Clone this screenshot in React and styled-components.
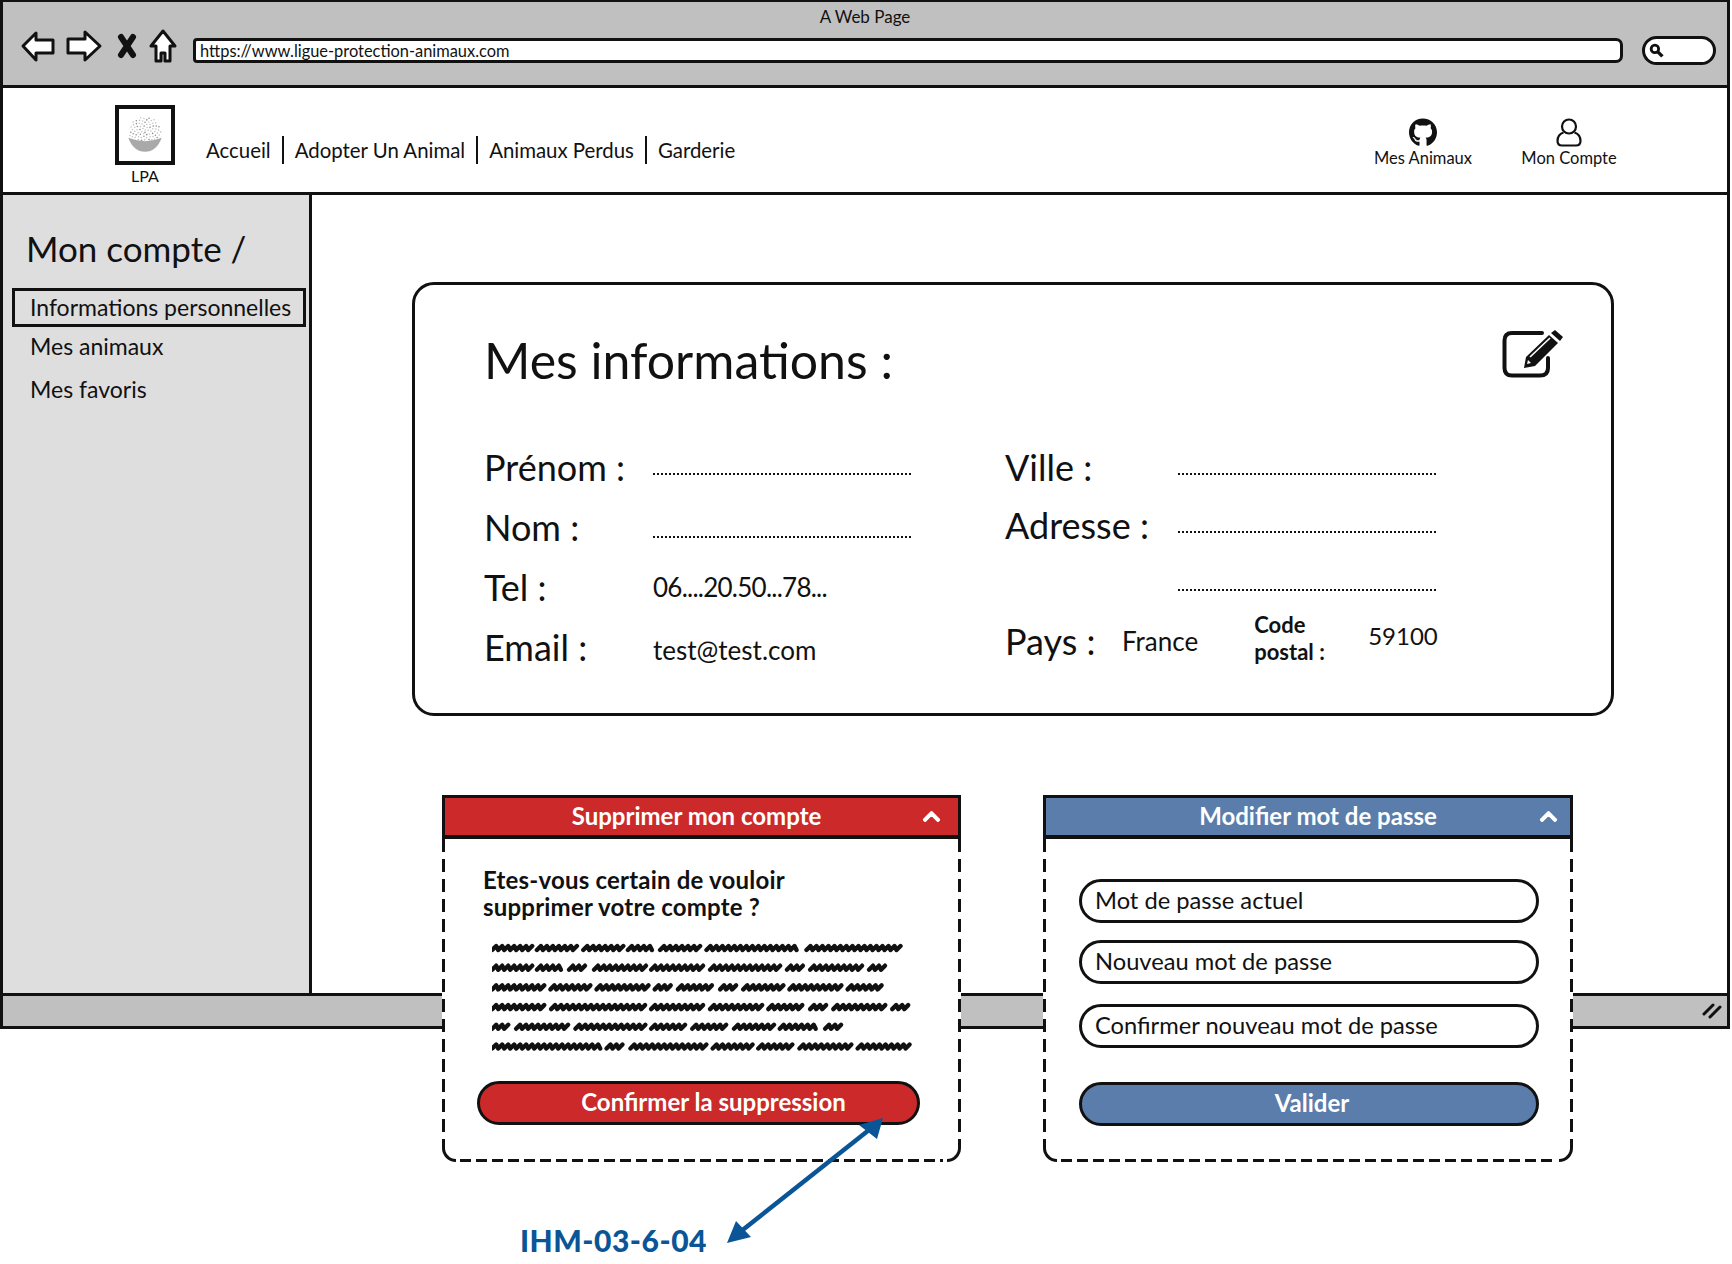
import React from "react";
import styled, { createGlobalStyle } from "styled-components";
import { FaGithub, FaChevronUp } from "react-icons/fa";

const INK = "#111";
const RED = "#cc2a2a";
const BLUE = "#5a7dab";

const GlobalStyle = createGlobalStyle`
  html, body {
    margin: 0;
    padding: 0;
    background: #fff;
  }
  body {
    font-family: "Lato", "Open Sans", sans-serif;
    color: ${INK};
  }
  * { box-sizing: border-box; }
`;

const Page = styled.div`
  position: relative;
  width: 1732px;
  height: 1264px;
  overflow: hidden;
`;

const Window = styled.div`
  width: 1730px;
  height: 1029px;
  border: 3px solid ${INK};
  border-top-width: 2px;
  display: flex;
  flex-direction: column;
`;

/* browser chrome */
const TitleBar = styled.div`
  height: 86px;
  flex: none;
  background: #c0c0c0;
  border-bottom: 3px solid ${INK};
  display: flex;
  flex-direction: column;
  padding-top: 5px;
`;

const WindowTitle = styled.div`
  font-size: 17px;
  line-height: 20px;
  text-align: center;
  margin-bottom: 9px;
`;

const ToolRow = styled.div`
  display: flex;
  align-items: center;
  padding-left: 17px;
`;

const ToolIcons = styled.svg`
  width: 164px;
  height: 36px;
  flex: none;
  margin: -9px 9px 0 0;
`;

const UrlBar = styled.div`
  width: 1430px;
  height: 25px;
  background: #fff;
  border: 3px solid ${INK};
  border-radius: 4px 7px 7px 4px;
  font-size: 16.4px;
  line-height: 19px;
  padding-left: 4px;
`;

const SearchBox = styled.div`
  width: 74px;
  height: 29px;
  margin-left: 19px;
  background: #fff;
  border: 3px solid ${INK};
  border-radius: 15px;
  display: flex;
  align-items: center;
  padding-left: 4px;
`;

/* site header */
const Header = styled.header`
  height: 107px;
  flex: none;
  border-bottom: 3px solid ${INK};
  display: flex;
  padding-left: 112px;
`;

const Brand = styled.div`
  width: 60px;
  padding-top: 17px;
  text-align: center;
  font-size: 16px;
  line-height: 20px;
  flex: none;
`;

const LogoBox = styled.div`
  width: 60px;
  height: 60px;
  border: 4px solid ${INK};
  background: #fff;
  margin-bottom: 1px;
  display: flex;
  align-items: center;
  justify-content: center;
`;

const NavList = styled.nav`
  display: flex;
  align-items: center;
  height: 28px;
  margin-top: 48px;
  margin-left: 31px;
`;

const NavLink = styled.a`
  font-size: 20.4px;
  line-height: 28px;
  padding: 0 11px;
  border-left: 2px solid ${INK};
  &:first-child {
    border-left: 0;
    padding-left: 0;
  }
`;

const HeaderActions = styled.div`
  margin-left: auto;
  margin-right: 108px;
  display: flex;
  gap: 46px;
  padding-top: 30px;
`;

const HeaderAction = styled.div`
  display: flex;
  flex-direction: column;
  align-items: center;
  font-size: 16.5px;
  line-height: 20px;
  width: 100px;
  svg {
    width: 28px;
    height: 29px;
    margin-bottom: 1px;
  }
`;

/* body */
const Body = styled.div`
  height: 798px;
  flex: none;
  display: flex;
`;

const Sidebar = styled.aside`
  width: 309px;
  flex: none;
  background: #dedede;
  border-right: 3px solid ${INK};
  padding: 30px 3px 0 9px;
`;

const SidebarTitle = styled.h2`
  margin: 0 0 17px 14px;
  font-size: 35px;
  line-height: 46px;
  font-weight: 400;
`;

const SideItem = styled.div`
  height: ${(p) => (p.$active ? "39px" : "43px")};
  line-height: ${(p) => (p.$active ? "33px" : "43px")};
  font-size: 23px;
  padding-left: 15px;
  white-space: nowrap;
  border: ${(p) => (p.$active ? `3px solid ${INK}` : "0")};
  margin-left: ${(p) => (p.$active ? "0" : "3px")};
  margin-bottom: ${(p) => (p.$active ? "-2px" : "0")};
`;

const Main = styled.main`
  flex: 1;
  padding: 87px 0 0 100px;
`;

const InfoCard = styled.section`
  position: relative;
  width: 1202px;
  height: 434px;
  border: 3px solid ${INK};
  border-radius: 22px;
  padding: 43px 0 0 69px;
`;

const CardTitle = styled.h1`
  margin: 0 0 45px;
  font-size: 50px;
  line-height: 64px;
  font-weight: 400;
`;

const EditButton = styled.svg`
  position: absolute;
  top: 45px;
  right: 48px;
  width: 61px;
  height: 48px;
`;

const FieldColumns = styled.div`
  display: flex;
`;

const FieldColumn = styled.div`
  width: ${(p) => p.$width}px;
  flex: none;
  margin-top: ${(p) => p.$top || 0}px;
`;

const FieldRow = styled.div`
  height: ${(p) => p.$height}px;
  display: flex;
  align-items: center;
`;

const FieldLabel = styled.div`
  width: ${(p) => p.$width}px;
  flex: none;
  font-size: 36px;
  line-height: 44px;
  white-space: nowrap;
`;

const DottedLine = styled.div`
  width: 258px;
  height: 2px;
  margin-top: ${(p) => p.$drop || 14}px;
  border-bottom: 2px dotted ${INK};
`;

const FieldValue = styled.div`
  font-size: ${(p) => p.$size || 26}px;
  line-height: 32px;
  white-space: nowrap;
  letter-spacing: ${(p) => p.$spacing || 0}px;
  margin-top: ${(p) => p.$drop || 0}px;
`;

const CodeLabel = styled.div`
  width: 114px;
  margin-left: 56px;
  flex: none;
  font-size: 22px;
  font-weight: 700;
  line-height: 27px;
  margin-top: -6px;
`;

const PanelRow = styled.div`
  display: flex;
  gap: 82px;
  margin: 79px 0 0 30px;
  position: relative;
  z-index: 2;
`;

const Panel = styled.section`
  width: ${(p) => p.$width}px;
  height: 367px;
  background: #fff;
  display: flex;
  flex-direction: column;
`;

const PanelHeader = styled.div`
  height: 44px;
  flex: none;
  background: ${(p) => p.$color};
  border: 3px solid ${INK};
  border-bottom-width: 4px;
  color: #fff;
  font-size: 24px;
  font-weight: 700;
  line-height: 36px;
  text-align: center;
  position: relative;
  padding: ${(p) => p.$padding};
  svg {
    position: absolute;
    right: ${(p) => p.$chevron}px;
    top: 9px;
    font-size: 19px;
    stroke: #fff;
    stroke-width: 30px;
  }
`;

const Corner = styled.i`
  position: absolute;
  bottom: 0;
  ${(p) => p.$side}: 0;
  width: 14px;
  height: 14px;
  border-bottom: 3px solid ${INK};
  border-${(p) => p.$side}: 3px solid ${INK};
  border-bottom-${(p) => p.$side}-radius: 14px;
`;

// long dashes of the mockup, a css dashed border is too short for them
const PanelBody = styled.div`
  flex: 1;
  position: relative;
  padding: ${(p) => p.$padding};
  background:
    repeating-linear-gradient(to bottom, ${INK} 0 13px, transparent 13px 20px) left top / 3px calc(100% - 14px) no-repeat,
    repeating-linear-gradient(to bottom, ${INK} 0 13px, transparent 13px 20px) right top / 3px calc(100% - 14px) no-repeat,
    repeating-linear-gradient(to right, ${INK} 0 11px, transparent 11px 16px) 18px bottom / calc(100% - 36px) 3px no-repeat;
`;

const Question = styled.p`
  margin: 0 0 23px 6px;
  font-size: 24px;
  font-weight: 700;
  line-height: 27px;
  letter-spacing: 0.2px;
`;

const Scribble = styled.svg`
  display: block;
  width: 425px;
  height: 118px;
  margin: 0 0 20px 15px;
`;

const ActionButton = styled.div`
  height: 44px;
  background: ${(p) => p.$color};
  border: 3px solid ${INK};
  border-radius: 22px;
  color: #fff;
  font-size: 24px;
  font-weight: 700;
  line-height: 35px;
  text-align: center;
  padding-left: ${(p) => p.$shift || 0}px;
`;

const PasswordField = styled.div`
  height: 44px;
  margin-bottom: ${(p) => p.$gap}px;
  border: 3px solid ${INK};
  border-radius: 22px;
  font-size: 23.7px;
  line-height: 36px;
  padding-left: 13px;
`;

const StatusBar = styled.div`
  flex: 1;
  background: #c0c0c0;
  border-top: 3px solid ${INK};
  display: flex;
  justify-content: flex-end;
  align-items: center;
  padding-right: 4px;
`;

/* annotation arrow over the page */
const AnnotationArrow = styled.svg`
  position: absolute;
  left: 0;
  top: 0;
  width: 1732px;
  height: 1264px;
  z-index: 3;
  pointer-events: none;
`;

const AnnotationLabel = styled.div`
  position: absolute;
  left: 520px;
  top: 1221px;
  z-index: 3;
  color: #0a5596;
  font-size: 30px;
  font-weight: 900;
  line-height: 38px;
  letter-spacing: 0.5px;
`;

const scribbleLines = [
  [[205, 315], [330, 440], [460, 570], [585, 660], [675, 785], [805, 1065], [1085, 1350]],
  [[205, 315], [330, 405], [420, 470], [490, 635], [650, 800], [815, 1010], [1030, 1075], [1095, 1240], [1260, 1305]],
  [[205, 350], [368, 478], [497, 642], [660, 708], [725, 825], [843, 890], [908, 1018], [1037, 1183], [1200, 1300]],
  [[205, 352], [370, 632], [650, 797], [815, 960], [978, 1078], [1095, 1143], [1160, 1307], [1325, 1375]],
  [[205, 253], [272, 418], [438, 632], [650, 748], [765, 865], [882, 992], [1010, 1118], [1137, 1185]],
  [[205, 508], [525, 572], [592, 805], [822, 932], [950, 1048], [1065, 1212], [1228, 1375]],
];

// squiggle for one word, coordinates are the 2.8x columns measured on the mockup
const wordPath = ([from, to], y) => {
  const x0 = from / 2.8 - 73;
  const x1 = to / 2.8 - 73;
  let d = `M${x0.toFixed(1)} ${y + 2}`;
  let up = true;
  for (let x = x0 + 3; x < x1; x += 3) {
    d += ` L${(x + (up ? 1 : 0)).toFixed(1)} ${y + (up ? -2 : 2)}`;
    up = !up;
  }
  return d;
};

const logoDots = [];
for (let i = 0; i < 90; i++) {
  const angle = i * 2.4;
  const r = Math.sqrt(i / 90) * 18;
  logoDots.push([25 + Math.cos(angle) * r, 22 + Math.sin(angle) * r]);
}

const LogoImage = () => (
  <svg width="44" height="46" viewBox="0 0 50 50">
    {logoDots.map(([cx, cy], i) => (
      <circle key={i} cx={cx} cy={cy} r="0.9" fill={i % 3 ? "#c4c4c4" : "#8d8d8d"} />
    ))}
    <path d="M6 28 Q25 36 44 28 Q38 44 25 44 Q12 44 6 28Z" fill="#a9a9a9" />
  </svg>
);

const BrowserTools = () => (
  <ToolIcons viewBox="0 0 164 36">
    <g fill="#fff" stroke={INK} strokeWidth="3" strokeLinejoin="round">
      <path d="M3 18 L16 5 V12 H33 V25 H16 V32 Z" />
      <path d="M48 11 H65 V4 L80 18 L65 32 V25 H48 Z" />
      <path d="M143 3 L155 18 H150 V33 H145 V25 H141 V33 H136 V18 H131 Z" />
    </g>
    <path d="M101 9 L113 27 M113 9 L101 27" stroke={INK} strokeWidth="6" strokeLinecap="round" />
  </ToolIcons>
);

const UserIcon = () => (
  <svg viewBox="0 0 28 29" fill="none" stroke={INK} strokeWidth="2.2">
    <circle cx="14" cy="8.5" r="7" />
    <path d="M8.5 14.5 C4 16 2.5 19 2.5 23 C2.5 26 4 27.5 7 27.5 H21 C24 27.5 25.5 26 25.5 23 C25.5 19 24 16 19.5 14.5" />
  </svg>
);

const EditIcon = () => (
  <EditButton viewBox="0 0 61 48">
    <path
      d="M40 3 H10 Q2.5 3 2.5 10.5 V38 Q2.5 45.5 10 45.5 H38 Q46 45.5 46 38 V28"
      fill="none"
      stroke={INK}
      strokeWidth="4"
      strokeLinecap="round"
    />
    <path d="M22 38 L24 27 L47 5 L56 13 L33 36 Z M49 3 L53 0 L61 7 L58 11 Z" fill={INK} />
    <path d="M28 27 L48 8" stroke="#fff" strokeWidth="1.6" />
    <path d="M25 34 L26 30 L29 33 Z" fill="#fff" />
  </EditButton>
);

const App = () => {
  return (
    <Page>
      <GlobalStyle />
      <Window>
        <TitleBar>
          <WindowTitle>A Web Page</WindowTitle>
          <ToolRow>
            <BrowserTools />
            <UrlBar>https://www.ligue-protection-animaux.com</UrlBar>
            <SearchBox>
              <svg width="15" height="15" viewBox="0 0 14 14" fill="none" stroke={INK}>
                <circle cx="5.5" cy="5.5" r="3.5" strokeWidth="2.6" />
                <path d="M8.5 8.5 L12.5 12.5" strokeWidth="3.2" />
              </svg>
            </SearchBox>
          </ToolRow>
        </TitleBar>

        <Header>
          <Brand>
            <LogoBox>
              <LogoImage />
            </LogoBox>
            LPA
          </Brand>
          <NavList>
            <NavLink>Accueil</NavLink>
            <NavLink>Adopter Un Animal</NavLink>
            <NavLink>Animaux Perdus</NavLink>
            <NavLink>Garderie</NavLink>
          </NavList>
          <HeaderActions>
            <HeaderAction>
              <FaGithub />
              Mes Animaux
            </HeaderAction>
            <HeaderAction>
              <UserIcon />
              Mon Compte
            </HeaderAction>
          </HeaderActions>
        </Header>

        <Body>
          <Sidebar>
            <SidebarTitle>Mon compte /</SidebarTitle>
            <SideItem $active>Informations personnelles</SideItem>
            <SideItem>Mes animaux</SideItem>
            <SideItem>Mes favoris</SideItem>
          </Sidebar>

          <Main>
            <InfoCard>
              <CardTitle>Mes informations :</CardTitle>
              <EditIcon />
              <FieldColumns>
                <FieldColumn $width={521}>
                  <FieldRow $height={60}>
                    <FieldLabel $width={169}>Prénom :</FieldLabel>
                    <DottedLine />
                  </FieldRow>
                  <FieldRow $height={60}>
                    <FieldLabel $width={169}>Nom :</FieldLabel>
                    <DottedLine $drop={20} />
                  </FieldRow>
                  <FieldRow $height={60}>
                    <FieldLabel $width={169}>Tel :</FieldLabel>
                    <FieldValue $spacing={-0.75}>06....20.50...78...</FieldValue>
                  </FieldRow>
                  <FieldRow $height={60}>
                    <FieldLabel $width={169}>Email :</FieldLabel>
                    <FieldValue $drop={6}>test@test.com</FieldValue>
                  </FieldRow>
                </FieldColumn>
                <FieldColumn $width={520} $top={1}>
                  <FieldRow $height={58}>
                    <FieldLabel $width={173}>Ville :</FieldLabel>
                    <DottedLine />
                  </FieldRow>
                  <FieldRow $height={58}>
                    <FieldLabel $width={173}>Adresse :</FieldLabel>
                    <DottedLine />
                  </FieldRow>
                  <FieldRow $height={58}>
                    <FieldLabel $width={173} />
                    <DottedLine />
                  </FieldRow>
                  <FieldRow $height={58}>
                    <FieldLabel $width={117}>Pays :</FieldLabel>
                    <FieldValue>France</FieldValue>
                    <CodeLabel>Code postal :</CodeLabel>
                    <FieldValue $size={24} $drop={-10}>59100</FieldValue>
                  </FieldRow>
                </FieldColumn>
              </FieldColumns>
            </InfoCard>

            <PanelRow>
              <Panel $width={519}>
                <PanelHeader $color={RED} $padding="0 10px 0 0" $chevron={17}>
                  Supprimer mon compte
                  <FaChevronUp />
                </PanelHeader>
                <PanelBody $padding="27px 41px 0 35px">
                  <Corner $side="left" />
                  <Corner $side="right" />
                  <Question>
                    Etes-vous certain de vouloir
                    <br />
                    supprimer votre compte ?
                  </Question>
                  <Scribble viewBox="0 0 425 118">
                    <g fill="none" stroke={INK} strokeWidth="4.4" strokeLinejoin="round" strokeLinecap="round">
                      {scribbleLines.map((words, row) =>
                        words.map((word, i) => (
                          <path key={`${row}-${i}`} d={wordPath(word, 5 + row * 19.7)} />
                        ))
                      )}
                    </g>
                  </Scribble>
                  <ActionButton $color={RED} $shift={30}>
                    Confirmer la suppression
                  </ActionButton>
                </PanelBody>
              </Panel>

              <Panel $width={530}>
                <PanelHeader $color={BLUE} $padding="0 0 0 20px" $chevron={12}>
                  Modifier mot de passe
                  <FaChevronUp />
                </PanelHeader>
                <PanelBody $padding="40px 34px 0 36px">
                  <Corner $side="left" />
                  <Corner $side="right" />
                  <PasswordField $gap={16.5}>Mot de passe actuel</PasswordField>
                  <PasswordField $gap={20.5}>Nouveau mot de passe</PasswordField>
                  <PasswordField $gap={34}>Confirmer nouveau mot de passe</PasswordField>
                  <ActionButton $color={BLUE} $shift={6}>Valider</ActionButton>
                </PanelBody>
              </Panel>
            </PanelRow>
          </Main>
        </Body>

        <StatusBar>
          <svg width="22" height="18" viewBox="0 0 22 18" fill="none" stroke={INK} strokeWidth="3" strokeLinecap="round">
            <path d="M3 12 L12 3 M9 15 L19 5" />
          </svg>
        </StatusBar>
      </Window>

      <AnnotationArrow viewBox="0 0 1732 1264">
        <path d="M735 1236 L874 1126" stroke="#0a5596" strokeWidth="4.5" fill="none" />
        <path d="M883 1118 L859 1125 L877 1139 Z M727 1243 L751 1237 L736 1221 Z" fill="#0a5596" />
      </AnnotationArrow>
      <AnnotationLabel>IHM-03-6-04</AnnotationLabel>
    </Page>
  );
};

export default App;
